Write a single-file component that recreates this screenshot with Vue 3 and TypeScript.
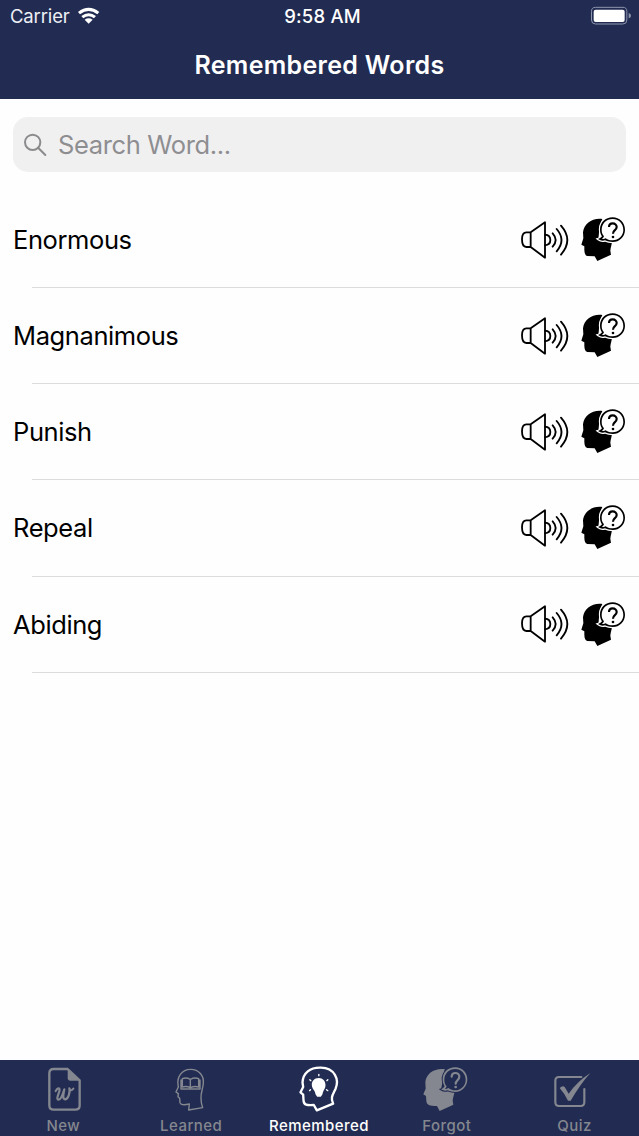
<script setup lang="ts">
import { ref, computed } from 'vue'

interface Tab {
  id: string
  label: string
  viewBox: string
}

const query = ref('')
const active = ref('remembered')

const words: string[] = ['Enormous', 'Magnanimous', 'Punish', 'Repeal', 'Abiding']

const tabs: Tab[] = [
  { id: 'new', label: 'New', viewBox: '27 15 150 165' },
  { id: 'learned', label: 'Learned', viewBox: '50 15 150 165' },
  { id: 'remembered', label: 'Remembered', viewBox: '103.5 15 150 165' },
  { id: 'forgot', label: 'Forgot', viewBox: '37 15 150 165' },
  { id: 'quiz', label: 'Quiz', viewBox: '30 15 150 165' },
]

const visible = computed(() =>
  words.filter((w) => w.toLowerCase().includes(query.value.toLowerCase())),
)
</script>

<template>
  <div class="screen">
    <header class="header">
      <div class="status">
        <div class="carrier">
          <span class="carrier-name">Carrier</span>
          <svg class="wifi" viewBox="230 20 70 52">
            <path d="M233 35 Q265 10 297 35 L291 42 Q265 22 239 42 Z" />
            <path d="M243 47 Q265 30 287 47 L281 54 Q265 42 249 54 Z" />
            <path d="M253 58 Q265 50 277 58 L265 70 Z" />
          </svg>
        </div>
        <span class="time">9:58 AM</span>
        <div class="power">
          <svg class="battery" viewBox="810 18 126 60">
            <rect x="814.5" y="22" width="106" height="50" rx="12" fill="none" stroke="#8f96ad" stroke-width="3" />
            <rect x="821" y="29" width="93" height="37" rx="6" fill="#fff" />
            <path d="M926 39 Q933 41 933 47 Q933 53 926 55 Z" fill="#8f96ad" />
          </svg>
        </div>
      </div>
      <h1 class="title">Remembered Words</h1>
    </header>

    <main class="content">
      <label class="search">
        <svg class="glass" viewBox="70 80 75 75">
          <circle cx="99" cy="111" r="23" />
          <path d="M116 128 L137 149" />
        </svg>
        <input v-model="query" class="field" type="text" placeholder="Search Word..." />
      </label>

      <ul class="list">
        <li v-for="w in visible" :key="w" class="row">
          <span class="word">{{ w }}</span>
          <svg class="speaker" viewBox="30 40 150 126">
            <path d="M62 80 H49 C39 80 36 87 36 101 C36 116 39 124 49 124 H62 Z M62 80 L105 50 V156 L62 124" />
            <path d="M105 87 C115 88 121 95 121 103 C121 112 115 118 105 119" />
            <path d="M128 83 Q146 103 128 123 M140 70 Q169 103 140 137 M153 60 Q191 103 153 147" />
          </svg>
          <svg class="head" viewBox="210 30 141 141">
            <path
              d="M277 42 C247 38 222 56 219 82 L220 100 L214 119 L223 124 L223 135 C224 146 225 151 232 153 L254 154 L262 168 L303 149 L301 137 C302 127 305 119 307 108 L265 105 L269 60 Z"
              fill="#000"
            />
            <path
              d="M308 37 C286 37 270 53 270 74 C270 84 273 89 276 94 Q273 99 264 102 Q275 110 285 106 C293 110 300 111 308 111 C328 111 345 95 345 74 C345 53 328 37 308 37 Z"
              fill="#000"
              stroke="#fff"
              stroke-width="7"
              paint-order="stroke"
            />
            <path
              d="M308 42 C289 42 275 56 275 75 C275 84 278 89 282 94 Q280 99 276 101 Q280 103 287 100 C294 105 300 106 308 106 C326 106 340 92 340 75 C340 56 326 42 308 42 Z"
              fill="#fff"
            />
            <path d="M297 66 C297 57 302 55 308 55 C315 55 320 60 320 66 C320 76 309 75 309 86" fill="none" stroke="#000" stroke-width="6.5" />
            <circle cx="309" cy="96" r="4" fill="#000" />
          </svg>
        </li>
      </ul>
    </main>

    <nav class="tabbar">
      <button
        v-for="t in tabs"
        :key="t.id"
        class="tab"
        :class="[t.id, { active: active === t.id }]"
        @click="active = t.id"
      >
        <svg class="tab-icon" :viewBox="t.viewBox">
          <g v-if="t.id === 'new'" class="line">
            <path d="M113 42 H71 Q58 42 58 55 V151 Q58 164 71 164 H136 Q149 164 149 151 V76 Z" stroke-width="7" />
            <path d="M113 42 L149 77 H120 Q113 77 113 70 Z" class="solid" />
            <path d="M77 108 C84 96 91 99 88 109 C84 122 78 133 86 134 C94 134 100 113 103 103 C100 119 97 134 106 133 C115 131 121 112 118 100 C121 108 125 107 130 101" stroke-width="6.5" />
          </g>
          <g v-else-if="t.id === 'learned'" class="line" stroke-width="4.2">
            <path d="M115 165 L117 147 C108 149 91 151 89 143 L88 130 L83 125 L84 116 L77 111 L84 96 C77 65 95 43 121 43 C146 43 161 63 159 84 C158 102 151 112 152 129 C152 145 154 151 157 158 Z" />
            <path d="M120 73 Q107 66 96 71 V96 Q108 92 120 98 Q133 92 145 96 V71 Q133 66 120 73 V98 M92 75 V102 H149 V75" />
          </g>
          <g v-else-if="t.id === 'remembered'">
            <path class="line" d="M172 166 L221 146 C212 128 220 119 228 102 C240 73 226 39 184 38 C151 37 131 54 129 82 L131 96 L123 112 L131 119 L132 135 C132 151 142 151 163 150 Z" stroke-width="7" />
            <path class="solid" d="M178 69 C164 69 156 79 157 91 C158 103 167 107 168 118 L173 125 H184 L189 118 C190 107 198 102 198 90 C198 78 190 69 178 69 Z" />
            <path class="line" d="M178 58 V62 M151 74 L154 77 M202 77 L205 74 M150 107 L153 104 M201 104 L205 107" stroke-width="4" />
          </g>
          <g v-else-if="t.id === 'forgot'">
            <path class="solid" d="M105 42 C73 39 50 55 47 81 L48 101 L41 118 L49 123 L50 137 C51 150 59 153 82 153 L90 168 L131 149 L129 137 C130 126 134 118 136 106 L94 105 Z" />
            <path class="bubble" d="M137 37 C114 37 99 53 99 73 C99 83 102 89 105 94 Q102 100 94 103 Q104 110 114 106 C121 109 129 111 137 111 C157 111 173 94 173 73 C173 53 157 37 137 37 Z" />
            <path class="inner" d="M137 42 C118 42 104 56 104 74 C104 84 107 89 111 94 Q109 99 106 102 Q110 103 116 99 C123 104 129 106 137 106 C154 106 168 92 168 74 C168 56 154 42 137 42 Z" />
            <path class="line" d="M126 65 C126 57 131 54 137 54 C144 54 149 59 149 65 C149 75 138 76 138 86" stroke-width="6.5" />
            <circle class="solid" cx="138" cy="96" r="4" />
          </g>
          <g v-else>
            <path class="line" d="M124 66 H57 Q46 66 46 77 V142 Q46 153 57 153 H122 Q133 153 133 142 V102" stroke-width="6.5" />
            <path class="solid" d="M59 99 Q68 91 74 96 L86 116 Q111 80 151 54 Q122 86 92 137 H84 Q75 117 59 99 Z" />
          </g>
        </svg>
        <span class="tab-label">{{ t.label }}</span>
      </button>
    </nav>
  </div>
</template>

<style>
body {
  margin: 0;
  background: #fefefe;
}
</style>

<style scoped>
.screen {
  display: flex;
  flex-direction: column;
  height: 1136px;
  background: #fefefe;
  font-family: Inter, 'Liberation Sans', sans-serif;
  color: #000;
}

.header {
  height: 99px;
  flex: none;
  background: #222c52;
  color: #fff;
}

.status {
  display: grid;
  grid-template-columns: 1fr auto 1fr;
  align-items: center;
  height: 32px;
  padding: 0 7px 0 10px;
}

.carrier {
  display: flex;
  align-items: center;
  gap: 7px;
}

.carrier-name {
  font-size: 18.5px;
  line-height: 22px;
  letter-spacing: -0.15px;
  color: #eef0f6;
}

.wifi {
  width: 23.3px;
  height: 17.3px;
  fill: #fff;
}

.time {
  padding-left: 3px;
  font-size: 18.5px;
  font-weight: 500;
  line-height: 22px;
  letter-spacing: 0.2px;
}

.power {
  display: flex;
  justify-content: flex-end;
}

.battery {
  width: 42px;
  height: 20px;
}

.title {
  margin: 0;
  font-size: 25px;
  font-weight: 600;
  line-height: 66px;
  letter-spacing: 0.3px;
  text-align: center;
}

.content {
  flex: 1;
}

.search {
  display: flex;
  align-items: center;
  gap: 10px;
  height: 55px;
  margin: 18px 13px 20px;
  padding: 0 10px;
  border-radius: 15px;
  background: #f1f0f1;
}

.glass {
  width: 25px;
  height: 25px;
  fill: none;
  stroke: #8b8b8e;
  stroke-width: 6;
  stroke-linecap: round;
}

.field {
  flex: 1;
  padding: 0;
  border: 0;
  outline: 0;
  background: transparent;
  font-family: inherit;
  font-size: 25.5px;
  letter-spacing: -0.35px;
  color: #000;
}

.field::placeholder {
  color: #8e8e91;
  opacity: 1;
}

.list {
  margin: 0;
  padding: 0;
  list-style: none;
}

.row {
  display: flex;
  align-items: center;
  height: 96.15px;
  padding: 0 12px 0 13px;
  background: linear-gradient(#dcdcde, #dcdcde) 32px 100% / 100% 1px no-repeat;
}

.word {
  flex: 1;
  font-size: 25.5px;
  line-height: 32px;
  letter-spacing: -0.4px;
}

.speaker {
  width: 50px;
  height: 42px;
  margin-right: 10px;
  margin-bottom: 1px;
  fill: none;
  stroke: #000;
  stroke-width: 5.5;
  stroke-linejoin: round;
  stroke-linecap: round;
}

.head {
  width: 47px;
  height: 47px;
  margin-bottom: 3px;
}

.tabbar {
  display: flex;
  flex: none;
  height: 76px;
  background: #222c52;
}

.tab {
  display: flex;
  flex: 1 1 0;
  min-width: 0;
  flex-direction: column;
  align-items: center;
  padding: 0;
  border: 0;
  background: none;
  font-family: inherit;
  color: #84878f;
}

.tab.active {
  color: #fff;
}

.tab-icon {
  width: 50px;
  height: 55px;
}

.line {
  fill: none;
  stroke: currentColor;
  stroke-linejoin: round;
  stroke-linecap: round;
}

.solid {
  fill: currentColor;
  stroke: none;
}

.bubble {
  fill: currentColor;
  stroke: #222c52;
  stroke-width: 6;
  paint-order: stroke;
}

.inner {
  fill: #222c52;
}

.tab-label {
  padding-right: 1px;
  font-size: 15px;
  font-weight: 500;
  line-height: 21px;
  letter-spacing: 0.45px;
}
</style>
